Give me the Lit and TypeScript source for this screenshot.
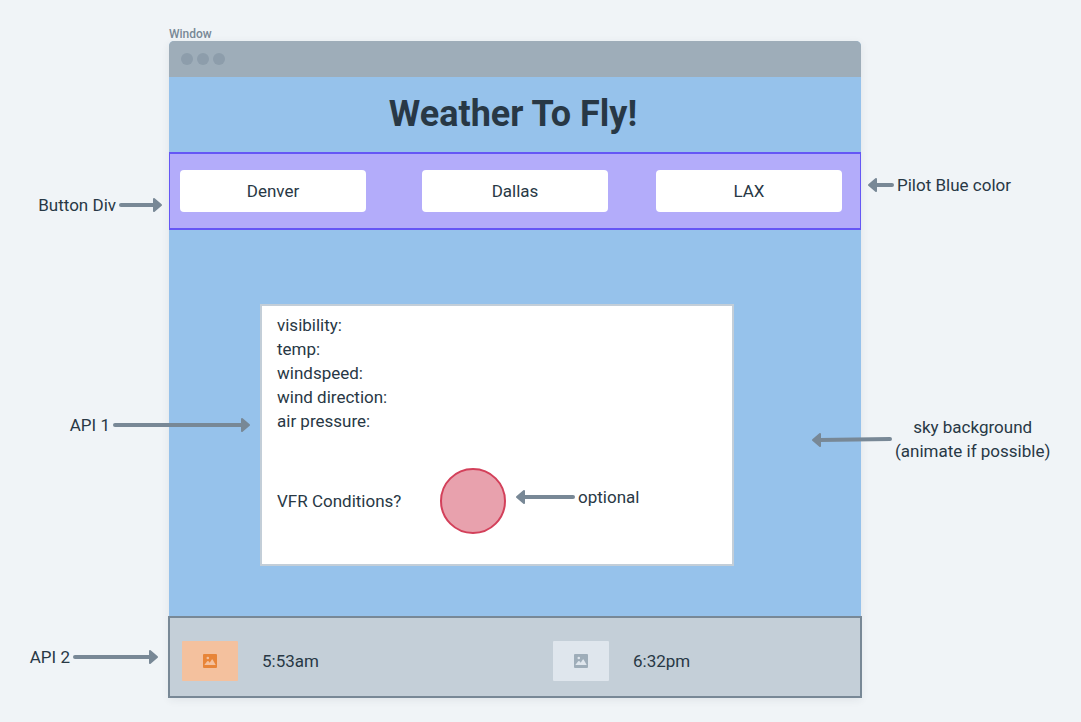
import { LitElement, html, css, svg } from "lit";
import { customElement, property } from "lit/decorators.js";

/** Straight arrow with a round tail and a solid head; `drop` lowers the head below the tail. */
@customElement("note-arrow")
class NoteArrow extends LitElement {
  @property({ type: Number }) length = 40;
  @property({ type: Number }) drop = 0;
  @property() direction: "left" | "right" = "right";

  static styles = css`
    :host {
      display: block;
      flex: none;
    }
    svg {
      display: block;
      overflow: visible;
    }
    .shaft {
      stroke: #788896;
      stroke-width: 4;
      stroke-linecap: round;
    }
    .head {
      fill: #788896;
      stroke: #788896;
      stroke-width: 2;
      stroke-linejoin: round;
    }
  `;

  render() {
    const l = this.length;
    const y = 7 + this.drop;
    const shape =
      this.direction === "right"
        ? svg`<line class="shaft" x1="2" y1="7" x2=${l - 8} y2=${y}></line>
              <path class="head" d="M${l - 8} ${y - 6} L${l - 1} ${y} L${l - 8} ${y + 6} Z"></path>`
        : svg`<line class="shaft" x1=${l - 2} y1="7" x2="8" y2=${y}></line>
              <path class="head" d="M8 ${y - 6} L1 ${y} L8 ${y + 6} Z"></path>`;
    return html`<svg width=${l} height="14" viewBox="0 0 ${l} 14" aria-hidden="true">${shape}</svg>`;
  }
}

@customElement("image-placeholder")
class ImagePlaceholder extends LitElement {
  static styles = css`
    :host {
      display: flex;
      align-items: center;
      justify-content: center;
      width: 56px;
      height: 40px;
      flex: none;
      border-radius: 1px;
    }
    svg {
      display: block;
    }
  `;

  render() {
    return html`<svg width="14" height="14" viewBox="0 0 14 14" aria-hidden="true">
      <path
        fill="currentColor"
        fill-rule="evenodd"
        d="M1 0H13a1 1 0 0 1 1 1V13a1 1 0 0 1-1 1H1a1 1 0 0 1-1-1V1a1 1 0 0 1 1-1Z
           M4.8 2.7a1.3 1.3 0 1 0 0 2.6a1.3 1.3 0 0 0 0-2.6Z
           M1.3 11H12.7L9.9 5.9Q9.2 4.8 8.5 5.9L6.7 8.7L5.6 7.3Q4.9 6.5 4.2 7.3Z"
      ></path>
    </svg>`;
  }
}

@customElement("app-root")
class AppRoot extends LitElement {
  static styles = css`
    :host {
      display: block;
      min-height: 100vh;
      box-sizing: border-box;
      background: #f0f4f7;
      color: #283845;
      font-family: Roboto, "Liberation Sans", sans-serif;
      font-size: 17px;
      line-height: 24px;
    }
    .board {
      position: relative;
      padding: 27px 220px 24px 169px;
    }
    .caption {
      font-size: 12px;
      font-weight: 500;
      line-height: 14px;
      color: #788896;
    }
    .window {
      background: #96c2eb;
      border-radius: 5px 5px 0 0;
      box-shadow: 0 2px 8px rgba(40, 56, 69, 0.08);
    }
    .titlebar {
      display: flex;
      align-items: center;
      gap: 4px;
      height: 36px;
      padding-left: 12px;
      background: #9eadb9;
      border-radius: 5px 5px 0 0;
    }
    .dot {
      width: 12px;
      height: 12px;
      border-radius: 50%;
      background: #8d9dab;
    }
    h1 {
      margin: 0;
      padding: 13px 4px 14px 0;
      text-align: center;
      font-size: 36px;
      line-height: 48px;
      font-weight: 700;
    }
    .cities {
      display: grid;
      grid-template-columns: 242fr 234fr 186fr;
      padding: 16px 18px 16px 10px;
      background: #b3acfa;
      border: solid #6557f5;
      border-width: 2px 1px;
    }
    .city {
      width: 186px;
      height: 42px;
      padding: 0;
      border: 0;
      border-radius: 4px;
      background: #fff;
      color: inherit;
      font: inherit;
    }
    .sky {
      padding: 74px 127px 50px 91px;
    }
    .card {
      padding: 7px 15px 30px;
      background: #fff;
      border: 2px solid #c3ced8;
    }
    .readings {
      margin: 0 0 35px;
      padding: 0;
      list-style: none;
    }
    .vfr {
      position: relative;
      display: grid;
      grid-template-columns: 163px 66px;
      align-items: center;
    }
    .light {
      box-sizing: border-box;
      height: 66px;
      border: 2px solid #d3405a;
      border-radius: 50%;
      background: #e8a1ad;
    }
    .sun {
      display: grid;
      grid-template-columns: 371fr 307fr;
      margin: 0 -1px;
      padding: 23px 0 15px 12px;
      background: #c4cfd8;
      border: 2px solid #788896;
    }
    .time {
      display: flex;
      align-items: center;
      gap: 24px;
    }
    .sunrise {
      background: #f4c19e;
      color: #e88538;
    }
    .sunset {
      background: #dfe6ed;
      color: #9eadb9;
    }
    .note {
      position: absolute;
      display: flex;
      align-items: center;
      gap: 3px;
      white-space: nowrap;
    }
    .centered {
      text-align: center;
    }
    .note-buttons {
      top: 193px;
      right: calc(100% - 162px);
    }
    .note-weather {
      top: 413px;
      right: calc(100% - 250px);
    }
    .note-sun {
      top: 645px;
      right: calc(100% - 158px);
    }
    .note-color {
      top: 173px;
      left: calc(100% - 213px);
    }
    .note-sky {
      top: 415px;
      left: calc(100% - 269px);
    }
    .note-optional {
      top: 17px;
      left: 239px;
    }
  `;

  private cities = ["Denver", "Dallas", "LAX"];
  private readings = ["visibility:", "temp:", "windspeed:", "wind direction:", "air pressure:"];

  render() {
    return html`
      <div class="board">
        <div class="caption">Window</div>
        <main class="window">
          <div class="titlebar">
            <span class="dot"></span><span class="dot"></span><span class="dot"></span>
          </div>
          <h1>Weather To Fly!</h1>
          <nav class="cities">
            ${this.cities.map((c) => html`<div><button class="city" type="button">${c}</button></div>`)}
          </nav>
          <section class="sky">
            <div class="card">
              <ul class="readings">
                ${this.readings.map((r) => html`<li>${r}</li>`)}
              </ul>
              <div class="vfr">
                <span>VFR Conditions?</span>
                <span class="light"></span>
                <div class="note note-optional">
                  <note-arrow direction="left" length="59"></note-arrow>
                  <span>optional</span>
                </div>
              </div>
            </div>
          </section>
          <footer class="sun">
            <div class="time"><image-placeholder class="sunrise"></image-placeholder><span>5:53am</span></div>
            <div class="time"><image-placeholder class="sunset"></image-placeholder><span>6:32pm</span></div>
          </footer>
        </main>

        <div class="note note-buttons">
          <span>Button Div</span><note-arrow length="43"></note-arrow>
        </div>
        <div class="note note-weather">
          <span>API 1</span><note-arrow length="137"></note-arrow>
        </div>
        <div class="note note-sun">
          <span>API 2</span><note-arrow length="85"></note-arrow>
        </div>
        <div class="note note-color">
          <note-arrow direction="left" length="26"></note-arrow><span>Pilot Blue color</span>
        </div>
        <div class="note note-sky">
          <note-arrow direction="left" length="80" drop="1"></note-arrow>
          <span class="centered">sky background<br />(animate if possible)</span>
        </div>
      </div>
    `;
  }
}
